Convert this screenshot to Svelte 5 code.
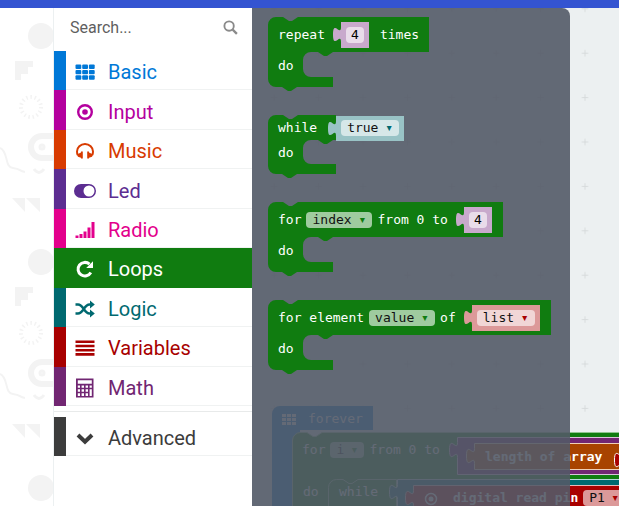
<script lang="ts">
    const categories = [
        { name: 'Basic', color: '#0078d7', icon: 'grid' },
        { name: 'Input', color: '#b4009e', icon: 'target' },
        { name: 'Music', color: '#d83b01', icon: 'headphones' },
        { name: 'Led', color: '#5c2d91', icon: 'toggle' },
        { name: 'Radio', color: '#e3008c', icon: 'signal' },
        { name: 'Loops', color: '#107c10', icon: 'repeat' },
        { name: 'Logic', color: '#006970', icon: 'shuffle' },
        { name: 'Variables', color: '#a80000', icon: 'lines' },
        { name: 'Math', color: '#712672', icon: 'calculator' },
    ];
    const advanced = { name: 'Advanced', color: '#3c3c3c', icon: 'chevron' };

    // edge: width of the green part when the value hangs outside of it
    const blocks = [
        { kind: 'inline', parts: [{ label: 'repeat' }, { number: '4' }, { label: 'times' }] },
        { kind: 'external', edge: 68, parts: [{ label: 'while' }, { value: 'true', tone: 'logic' }] },
        { kind: 'inline', parts: [{ label: 'for' }, { field: 'index' }, { label: 'from 0 to' }, { number: '4' }] },
        { kind: 'inline', parts: [{ label: 'for element' }, { field: 'value' }, { label: 'of' }, { value: 'list', tone: 'variable' }] },
    ] as any[];

    let selected = $state('Loops');
    let search = $state('');
    let widths: number[] = $state([0, 0, 0, 0]);

    const TAB = 'v 5 c 0,10 -8,-8 -8,7.5 s 8,-2.5 8,7.5';

    function loopPath(width: number, head: number, inner: number, foot: number, footWidth: number) {
        const bottom = head + inner + foot;
        return `M 0,8 A 8,8 0 0,1 8,0 H 15 l 6,4 3,0 6,-4 H ${width} V ${head} H 65 l -6,4 -3,0 -6,-4 h -7 `
            + `a 8,8 0 0,0 -8,8 v ${inner - 16} a 8,8 0 0,0 8,8 H ${footWidth} V ${bottom} `
            + `H 29 l -6,4 -3,0 -6,-4 H 8 a 8,8 0 0,1 -8,-8 z`;
    }

    function shapeOf(i: number) {
        const b = blocks[i];
        if (b.kind == 'external') return loopPath(b.edge, 25, 24, 10, 68);
        return loopPath(widths[i], 35, 25, 10, 65);
    }
</script>

{#snippet icon(name: string)}
    <svg class="icon" viewBox="0 0 24 20" aria-hidden="true">
        {#if name == 'grid'}
            {#each [2.5, 7.9, 13.3] as y}
                {#each [2.5, 9.2, 15.9] as x}
                    <rect {x} {y} width="5.8" height="4.4" rx="1" />
                {/each}
            {/each}
        {:else if name == 'target'}
            <circle cx="12" cy="10" r="6.8" fill="none" stroke="currentColor" stroke-width="2.4" />
            <circle cx="12" cy="10" r="2.8" />
        {:else if name == 'headphones'}
            <path d="M4.800 14 C4 12.500 4 11.500 4 10.500 C4 6.500 7.500 3 12 3 S20 6.500 20 10.500 C20 11.500 20 12.500 19.200 14" fill="none" stroke="currentColor" stroke-width="2" />
            <path d="M3.800 13.500 L8 11.500 V10.500 H9.800 V17.500 H8 V16.800 L5 15.800z M20.200 13.500 L16 11.500 V10.500 H14.200 V17.500 H16 V16.800 L19 15.800z" />
        {:else if name == 'toggle'}
            <path fill-rule="evenodd" d="M8 3 H16 A7 7 0 0 1 16 17 H8 A7 7 0 0 1 8 3z M16 4.500 A5.500 5.500 0 0 0 16 15.500 A5.500 5.500 0 0 0 16 4.500z" />
        {:else if name == 'signal'}
            <path d="M2.500 15.500h3v2.500h-3z M6.500 14h3v4h-3z M10.500 11.500h3V18h-3z M14.500 7.500h3V18h-3z M18.500 2h3v16h-3z" />
        {:else if name == 'repeat'}
            <path d="M17.800 13.500 A6.800 6.800 0 1 1 16.500 5.200" fill="none" stroke="currentColor" stroke-width="3" />
            <path d="M20 2.200 V9 H13.200z" />
        {:else if name == 'shuffle'}
            <path d="M2.500 5.500 H5 C10.500 5.500 11 14.500 16.500 14.500 H18 M2.500 14.500 H5 C10.500 14.500 11 5.500 16.500 5.500 H18" fill="none" stroke="currentColor" stroke-width="2.400" />
            <path d="M17 1.500 L21.800 5.500 L17 9.500z M17 10.500 L21.800 14.500 L17 18.500z" />
        {:else if name == 'lines'}
            <path d="M2.500 2.500h19v2.600h-19z M2.500 6.700h19v2.600h-19z M2.500 10.900h19v2.600h-19z M2.500 15.100h19v2.600h-19z" />
        {:else if name == 'calculator'}
            <path fill-rule="evenodd" d="M3 .5H20.500V19.500H3z M4.800 2.200V5.800H18.800V2.200z M4.800 7.400V9.700H7V7.400z M8.600 7.400V9.700H11V7.400z M12.600 7.400V9.700H15V7.400z M16.600 7.400V9.700H18.800V7.400z M4.800 11.300V13.700H7V11.300z M8.600 11.300V13.700H11V11.300z M12.600 11.300V13.700H15V11.300z M16.600 11.300V18H18.800V11.300z M4.800 15.300V18H7V15.300z M8.600 15.300V18H11V15.300z M12.600 15.300V18H15V15.300z" />
        {:else if name == 'chevron'}
            <path d="M5 7 L12 13.800 L19 7" fill="none" stroke="currentColor" stroke-width="4" />
        {/if}
    </svg>
{/snippet}

{#snippet category(item: { name: string; color: string; icon: string })}
    <button
        class="category"
        class:selected={selected == item.name}
        style:--accent={item.color}
        onclick={() => (selected = item.name)}
    >
        <span class="row">
            {@render icon(item.icon)}
            <span>{item.name}</span>
        </span>
    </button>
{/snippet}

{#snippet dropdown(text: string, tone: string)}
    <span class="field {tone}">
        <select aria-label={text}>
            <option>{text}</option>
        </select>
        <span class="caret" aria-hidden="true">▾</span>
    </span>
{/snippet}

{#snippet connector()}
    <svg class="tab" viewBox="-8 0 8 25" aria-hidden="true"><path d="M 0,0 {TAB} z" /></svg>
{/snippet}

<header class="topbar"></header>
<main class="editor">
    <section class="workspace" aria-label="Workspace">
        <svg class="canvas" aria-hidden="true">
            <defs>
                <pattern id="dots" x="562.800" y="23" width="44.400" height="44.400" patternUnits="userSpaceOnUse">
                    <path d="M19 22.200h6.400 M22.200 19v6.400" stroke="#d7dbdc" stroke-width="1" />
                </pattern>
            </defs>
            <rect width="100%" height="100%" fill="url(#dots)" />
            <path fill="#0078d7" d="M 272,406 A 8,8 0 0,1 280,398 H 373 V 422 H 300 V 520 H 272z" />
            <path fill="#107c10" stroke="#8fc48f" d="M 292.500,432 A 8,8 0 0,1 300.500,424.500 H 307 l 6,4 3,0 6,-4 H 2000 V 520 H 292.500z" />
            <path fill="#712672" stroke="#d9c3da" d="M 457.500,429.500 {TAB} V 466.500 H 2000 V 429.500z" />
            <path fill="#a84300" stroke="#efd0b8" d="M 474.500,435.500 {TAB} V 461.500 H 2000 V 435.500z" />
            <path fill="#a80000" stroke="#fff" d="M 622.500,439.500 {TAB} h 20 v -20z" />
            <path fill="#107c10" stroke="#8fc48f" d="M 328.500,520 V 479.500 a 8,8 0 0,1 8,-8 H 343 l 6,4 3,0 6,-4 H 396.500 V 520z" />
            <path fill="#006970" stroke="#b8d8da" d="M 397.500,471.500 {TAB} V 520 H 2000 V 471.500z" />
            <path fill="#a80000" stroke="#e9b8b8" d="M 413.500,477.500 {TAB} V 520 H 2000 V 477.500z" />
            <g fill="#fff">
                {#each [406, 410, 414] as y}
                    {#each [282, 287, 292] as x}
                        <rect {x} {y} width="4" height="3" />
                    {/each}
                {/each}
                <circle cx="431" cy="491" r="5.500" fill="none" stroke="#fff" stroke-width="1.500" />
                <circle cx="431" cy="491" r="2.500" />
            </g>
        </svg>
        <span class="node forever">forever</span>
        <span class="node for">
            <span>for</span>
            {@render dropdown('i', 'loop')}
            <span>from 0 to</span>
        </span>
        <span class="node length">length of array</span>
        <span class="node do">do</span>
        <span class="node while">while</span>
        <span class="node read">
            <span>digital read pin</span>
            {@render dropdown('P1', 'pin')}
        </span>
    </section>

    <div class="backdrop" aria-hidden="true">
        <svg>
            <defs>
                <pattern id="doodles" y="8" width="54" height="226" patternUnits="userSpaceOnUse">
                    <g fill="#f3f3f3">
                        <circle cx="41" cy="20" r="13" />
                        <path d="M15 45h18v6h-5v7h-7v6h-6z M12 182h13v14z M26 182h14v14z" />
                    </g>
                    <g fill="none" stroke="#f3f3f3">
                        <circle cx="31" cy="91" r="10" stroke-width="4" stroke-dasharray="1.500 2.700" />
                        <path d="M54 120H42a11 11 0 0 0 0 22H54" stroke-width="6" />
                        <circle cx="42" cy="131" r="1.500" stroke-width="4" />
                        <path d="M34 153q5 7 10 0" stroke-width="3" />
                        <path d="M0 132C9 136 4 151 13 152S18 155 25 156" stroke-width="2" />
                    </g>
                </pattern>
            </defs>
            <rect width="100%" height="100%" fill="url(#doodles)" />
        </svg>
    </div>

    <nav class="toolbox">
        <label class="search">
            <input type="text" placeholder="Search..." aria-label="Search" bind:value={search} />
            <svg viewBox="0 0 16 16" aria-hidden="true">
                <circle cx="6.500" cy="6.500" r="5" fill="none" stroke="#8a8a8a" stroke-width="2" />
                <path d="M10.300 10.300 L14.800 14.800" stroke="#8a8a8a" stroke-width="2.400" />
            </svg>
        </label>
        <div class="categories">
            {#each categories as item}
                {@render category(item)}
            {/each}
        </div>
        <div class="more">
            {@render category(advanced)}
        </div>
    </nav>

    <section class="flyout" aria-label="Loops">
        {#each blocks as block, i}
            <div class="block {block.kind}" bind:clientWidth={widths[i]}>
                <svg class="shape" aria-hidden="true"><path d={shapeOf(i)} /></svg>
                <div class="head">
                    {#each block.parts as part}
                        {#if part.label}
                            <span>{part.label}</span>
                        {:else if part.field}
                            {@render dropdown(part.field, 'loop')}
                        {:else if part.number}
                            <span class="value math">
                                {@render connector()}
                                <input type="text" value={part.number} aria-label="number" />
                            </span>
                        {:else}
                            <span class="value {part.tone}">
                                {@render connector()}
                                {@render dropdown(part.value, part.tone)}
                            </span>
                        {/if}
                    {/each}
                </div>
                <div class="body">do</div>
            </div>
        {/each}
    </section>
</main>

<style>
    :global(body) {
        margin: 0;
    }

    .topbar {
        height: 8px;
        background: #3454d1;
    }

    .editor {
        position: relative;
        display: flex;
        height: calc(100vh - 8px);
        overflow: hidden;
        background: #ecf0f1;
        font-family: Roboto, "Liberation Sans", sans-serif;
    }

    .workspace {
        position: absolute;
        inset: 0;
        overflow: hidden;
    }

    .canvas {
        width: 100%;
        height: 100%;
        display: block;
    }

    .backdrop {
        position: relative;
        width: 54px;
        background: #fff;
    }

    .backdrop svg {
        width: 100%;
        height: 100%;
        display: block;
    }

    /* toolbox */

    .toolbox {
        position: relative;
        box-sizing: border-box;
        width: 198px;
        background: #fff;
        box-shadow: -1px 0 0 #ecf0f1;
    }

    .search {
        display: flex;
        align-items: center;
        height: 39px;
        padding: 0 14px 4px 16px;
    }

    .search input {
        flex: 1;
        min-width: 0;
        padding: 0;
        border: 0;
        outline: 0;
        background: none;
        font: 16px Roboto, sans-serif;
        color: #555;
    }

    .search input::placeholder {
        color: #5f5f5f;
        opacity: 1;
    }

    .search svg {
        width: 15px;
        height: 15px;
    }

    .categories {
        display: grid;
        grid-auto-rows: 1fr;
        height: 355px;
    }

    .more {
        display: grid;
        grid-auto-rows: 39px;
        margin-top: 5px;
        padding-top: 5px;
        border-top: 1px solid #e8eaea;
    }

    .category {
        display: flex;
        padding: 0;
        border: 0;
        border-left: 12px solid var(--accent);
        background: #fff;
        font: 20px Roboto, sans-serif;
        color: var(--accent);
        text-align: left;
        cursor: pointer;
    }

    .category.selected {
        background: var(--accent);
        color: #fff;
    }

    .row {
        flex: 1;
        display: flex;
        align-items: center;
        gap: 11px;
        padding: 4px 0 0 7px;
        border-bottom: 1px solid #f0f2f2;
    }

    .selected .row {
        border-color: transparent;
    }

    .icon {
        width: 24px;
        height: 20px;
        fill: currentColor;
    }

    /* flyout */

    .flyout {
        position: relative;
        box-sizing: border-box;
        display: flex;
        flex-direction: column;
        align-items: flex-start;
        gap: 28px;
        width: 318px;
        padding: 9px 16px;
        border-radius: 0 8px 0 0;
        background: rgba(83, 90, 103, 0.9);
    }

    .block {
        position: relative;
    }

    .flyout,
    .node {
        font-family: "DejaVu Sans Mono", "Liberation Mono", monospace;
        font-size: 13px;
        line-height: 16px;
        color: #fff;
        white-space: nowrap;
    }

    .shape {
        position: absolute;
        inset: 0;
        width: 100%;
        height: 100%;
        overflow: visible;
        fill: #107c10;
    }

    .head {
        position: relative;
        box-sizing: border-box;
        display: flex;
        align-items: center;
        gap: 5px;
        height: 35px;
        padding: 1px 10px 0;
    }

    .body {
        position: relative;
        box-sizing: border-box;
        display: flex;
        align-items: center;
        height: 35px;
        padding: 2px 10px 10px;
    }

    .external .head {
        height: 25px;
    }

    .external .body {
        height: 34px;
    }

    .value {
        position: relative;
        display: flex;
        align-items: center;
        box-sizing: border-box;
        height: 26px;
        margin: 0 6px 0 11px;
        padding: 0 5px;
        background: var(--tone);
    }

    .value:last-child {
        margin-right: 1px;
    }

    .external .value {
        height: 25px;
        margin-left: 14px;
    }

    .tab {
        position: absolute;
        right: 100%;
        top: 0;
        width: 8px;
        height: 25px;
        fill: var(--tone);
    }

    .value.math {
        --tone: #c8a9cc;
    }

    .value.logic {
        --tone: #99c3c6;
    }

    .value.variable {
        --tone: #dc9999;
    }

    .value input {
        box-sizing: border-box;
        width: 18px;
        height: 16px;
        padding: 0;
        border: 0;
        border-radius: 4px;
        background: #e9dcea;
        font: inherit;
        color: #000;
        text-align: center;
    }

    .field {
        display: flex;
        align-items: center;
        height: 16px;
        border-radius: 4px;
        background: #9fcb9f;
        color: #107c10;
    }

    .field.logic {
        background: #d6e7e8;
        color: #006970;
    }

    .field.variable {
        background: #f1d6d6;
        color: #a80000;
    }

    .field.pin {
        background: #dc9999;
        color: #a80000;
    }

    .field select {
        appearance: none;
        margin: 0;
        padding: 0 20px 0 6px;
        border: 0;
        outline: 0;
        background: none;
        font: inherit;
        color: #111;
    }

    .caret {
        width: 8px;
        margin: 0 6px 0 -14px;
        pointer-events: none;
    }

    /* nodes placed on the canvas */

    .node {
        position: absolute;
        display: flex;
        align-items: center;
        gap: 5px;
    }

    .forever {
        left: 308px;
        top: 403px;
    }

    .for {
        left: 302px;
        top: 434px;
    }

    .length {
        left: 485px;
        top: 441px;
        font-weight: bold;
    }

    .do {
        left: 303px;
        top: 476px;
    }

    .while {
        left: 339px;
        top: 476px;
    }

    .read {
        left: 453px;
        top: 482px;
        font-weight: bold;
    }

    .read .field {
        font-weight: normal;
    }
</style>
